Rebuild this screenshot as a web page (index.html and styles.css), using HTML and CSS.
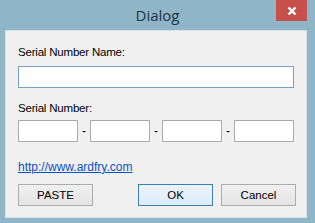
FILE: index.html
```html
<!DOCTYPE html>
<html lang="en">
<head>
    <meta charset="UTF-8">
    <meta name="viewport" content="width=device-width, initial-scale=1.0">
    <title>Dialog</title>
    <link rel="stylesheet" href="styles.css">
</head>
<body>
    <div class="window">
        <!-- title bar -->
        <div class="titlebar">
            <span class="title">Dialog</span>
            <div class="close-btn">
                <svg width="10" height="8" viewBox="0 0 10 8">
                    <path d="M1.5 0.5 L8.5 7.5 M8.5 0.5 L1.5 7.5" stroke="#fff" stroke-width="2.4"/>
                </svg>
            </div>
        </div>

        <div class="panel">
            <label class="field-label">Serial Number Name:</label>
            <input class="name-input" type="text">

            <label class="field-label serial-label">Serial Number:</label>
            <div class="serial-row">
                <input class="serial-box" type="text">
                <span class="dash">-</span>
                <input class="serial-box" type="text">
                <span class="dash">-</span>
                <input class="serial-box" type="text">
                <span class="dash">-</span>
                <input class="serial-box" type="text">
            </div>

            <a class="site-link" href="#">http://www.ardfry.com</a>

            <div class="button-row">
                <button class="btn">PASTE</button>
                <div class="right-buttons">
                    <button class="btn btn-default">OK</button>
                    <button class="btn">Cancel</button>
                </div>
            </div>
        </div>
    </div>
</body>
</html>
```

FILE: styles.css
```css
/* window frame */
body {
    margin: 0;
    background-color: #8fb6c6;
    font-family: "Liberation Sans", Arial, sans-serif;
    font-size: 11px;
    color: #000;
}

.window {
    width: 315px;
    height: 223px;
}

.titlebar {
    position: relative;
    height: 30px;
    text-align: center;
}

.title {
    display: inline-block;
    margin-top: 5px;
    font-family: "Open Sans", "Noto Sans", sans-serif;
    font-size: 15px;
    line-height: 20px;
    color: #1f3446;
}

/* close button (X) */
.close-btn {
    position: absolute;
    top: 0;
    right: 8px;
    width: 31px;
    height: 21px;
    background-color: #c8504c;
    display: flex;
    justify-content: center;
    align-items: center;
}

/* content area */
.panel {
    margin-left: 5px;
    width: 276px;
    height: 172px;
    padding: 14px 12px 0 12px;
    background-color: #f0f0f0;
    border: 1px solid #d4e1e7;
    display: flex;
    flex-direction: column;
    align-items: flex-start;
}

.field-label {
    font-size: 11.5px;
    line-height: 15px;
    letter-spacing: -0.2px;
}

.name-input {
    margin: 6px 0 0 0;
    width: 276px;
    height: 22px;
    box-sizing: border-box;
    border: 1px solid #7a9ecb;
    background: #fff;
    padding: 0;
}

.serial-label {
    margin-top: 13px;
}

.serial-row {
    margin-top: 4px;
    display: flex;
    align-items: center;
    width: 276px;
}

.serial-box {
    width: 60px;
    height: 22px;
    box-sizing: border-box;
    border: 1px solid #ababab;
    background: #fff;
    padding: 0;
    margin: 0;
}

.dash {
    width: 12px;
    text-align: center;
    font-size: 12px;
}

.site-link {
    margin-top: 18px;
    font-size: 12px;
    line-height: 15px;
    color: #0a50c8;
    text-decoration: underline;
}

/* bottom buttons */
.button-row {
    margin-top: 9px;
    width: 278px;
    display: flex;
    justify-content: space-between;
}

.right-buttons {
    display: flex;
    gap: 8px;
}

.btn {
    width: 75px;
    height: 22px;
    box-sizing: border-box;
    border: 1px solid #acacac;
    background: linear-gradient(#f0f0f0, #e4e4e4);
    font-family: "Liberation Sans", Arial, sans-serif;
    font-size: 11.5px;
    color: #000;
    padding: 0;
}

.btn-default {
    border-color: #3c7fb1;
    background: linear-gradient(#ecf4fc, #dcecfc);
}
```
